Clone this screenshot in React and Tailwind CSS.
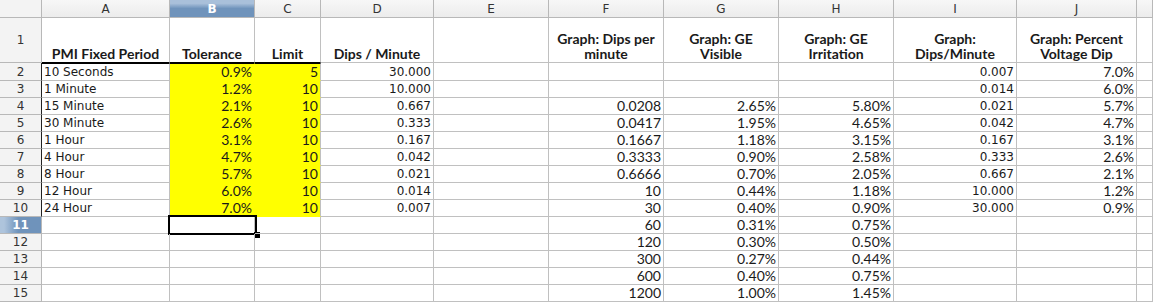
import React from "react";

const COLS = ["A", "B", "C", "D", "E", "F", "G", "H", "I", "J", ""];

// [A, B, C, D, E, F, G, H, I, J]
const DATA = [
  ["10 Seconds", "0.9%", "5", "30.000", "", "", "", "", "0.007", "7.0%"],
  ["1 Minute", "1.2%", "10", "10.000", "", "", "", "", "0.014", "6.0%"],
  ["15 Minute", "2.1%", "10", "0.667", "", "0.0208", "2.65%", "5.80%", "0.021", "5.7%"],
  ["30 Minute", "2.6%", "10", "0.333", "", "0.0417", "1.95%", "4.65%", "0.042", "4.7%"],
  ["1 Hour", "3.1%", "10", "0.167", "", "0.1667", "1.18%", "3.15%", "0.167", "3.1%"],
  ["4 Hour", "4.7%", "10", "0.042", "", "0.3333", "0.90%", "2.58%", "0.333", "2.6%"],
  ["8 Hour", "5.7%", "10", "0.021", "", "0.6666", "0.70%", "2.05%", "0.667", "2.1%"],
  ["12 Hour", "6.0%", "10", "0.014", "", "10", "0.44%", "1.18%", "10.000", "1.2%"],
  ["24 Hour", "7.0%", "10", "0.007", "", "30", "0.40%", "0.90%", "30.000", "0.9%"],
  ["", "", "", "", "", "60", "0.31%", "0.75%", "", ""],
  ["", "", "", "", "", "120", "0.30%", "0.50%", "", ""],
  ["", "", "", "", "", "300", "0.27%", "0.44%", "", ""],
  ["", "", "", "", "", "600", "0.40%", "0.75%", "", ""],
  ["", "", "", "", "", "1200", "1.00%", "1.45%", "", ""],
];

const HEAD = [
  ["PMI Fixed Period"],
  ["Tolerance"],
  ["Limit"],
  ["Dips / Minute"],
  [],
  ["Graph: Dips per", "minute"],
  ["Graph: GE", "Visible"],
  ["Graph: GE", "Irritation"],
  ["Graph:", "Dips/Minute"],
  ["Graph: Percent", "Voltage Dip"],
  [],
];

const dejavu = "font-['DejaVu_Sans',sans-serif]";
const lato = "font-['Lato',sans-serif]";

function cellFont(ci) {
  if (ci === 0 || ci === 3 || ci === 8) return `${dejavu} text-[12px]`;
  return `${lato} text-[14px]`;
}

export default function App() {
  const gridCols =
    "grid grid-cols-[42px_128px_85px_66px_113px_115px_115px_115px_115px_123px_120px_1fr]";
  return (
    <div className="w-[1153px] h-[304px] overflow-hidden bg-white text-[#1a1a1a]">
      {/* column header row */}
      <div className={`${gridCols} h-[18px]`}>
        <div className="border-r border-b border-[#b8b8b8] bg-[#f3f3f3]" />
        {COLS.map((c, i) => (
          <div
            key={i}
            className={
              "flex items-center justify-center border-r border-b border-[#b8b8b8] " +
              dejavu +
              " text-[12px] leading-none " +
              (c === "B"
                ? "bg-gradient-to-b from-[#a9c0da] from-20% to-[#6f93bb] to-50% text-white font-bold"
                : "bg-gradient-to-b from-[#f7f7f7] to-[#ececec] text-[#333]")
            }
          >
            {c}
          </div>
        ))}
      </div>

      {/* row 1 headers */}
      <div className={`${gridCols} h-[45px]`}>
        <div
          className={`flex items-center justify-center border-r border-b border-[#b8b8b8] bg-[#f3f3f3] ${dejavu} text-[12px] text-[#333]`}
        >
          1
        </div>
        {HEAD.map((h, i) => (
          <div
            key={i}
            className={
              "flex flex-col items-center justify-end border-r border-b px-[2px] pb-[1px] text-center whitespace-nowrap " +
              lato +
              " font-bold text-[14px] leading-[15px] " +
              (i <= 2 ? "border-r-[#c0c0c0] border-b-black" : "border-[#c0c0c0]")
            }
          >
            {h.map((line, li) => (
              <span key={li} className="block">
                {line}
              </span>
            ))}
          </div>
        ))}
      </div>

      {/* data rows */}
      {DATA.map((row, ri) => {
        const r = ri + 2;
        const selRow = r === 11;
        const first = r === 2;
        return (
          <div key={r} className={`${gridCols} ${first ? "h-[18px]" : "h-[17px]"}`}>
            <div
              className={
                "flex items-center justify-center border-r border-b " +
                dejavu +
                " text-[12px] leading-none " +
                (r <= 10 ? "border-r-[#222] border-b-[#b8b8b8] " : "border-[#b8b8b8] ") +
                (selRow
                  ? "bg-gradient-to-r from-[#aec4dc] from-10% to-[#6f93bb] to-45% text-white font-bold"
                  : "bg-[#f3f3f3] text-[#333]")
              }
            >
              {r}
            </div>
            {[...row, ""].map((v, ci) => {
              const yellow = (ci === 1 || ci === 2) && r <= 10;
              const isText = ci === 0;
              return (
                <div
                  key={ci}
                  className={
                    "relative flex items-center whitespace-nowrap leading-none " +
                    (first && ci <= 2 ? "border-t border-t-black " : "") +
                    (yellow
                      ? "bg-[#ffff00] border-b border-b-[#ffff00] " +
                        (ci === 1 ? "border-r border-r-[#ffff00] " : "border-r border-r-[#c0c0c0] ")
                      : "border-r border-b border-[#c0c0c0] ") +
                    (isText ? "justify-start pl-[2px] " : "justify-end pr-[2px] ") +
                    cellFont(ci)
                  }
                >
                  {v}
                  {selRow && ci === 1 && (
                    <div className="absolute left-[-2px] top-[-2px] w-[89px] h-[20px] border-2 border-black">
                      <div className="absolute right-[-5px] bottom-[-5px] w-[6px] h-[6px] bg-black" />
                    </div>
                  )}
                </div>
              );
            })}
          </div>
        );
      })}
    </div>
  );
}
